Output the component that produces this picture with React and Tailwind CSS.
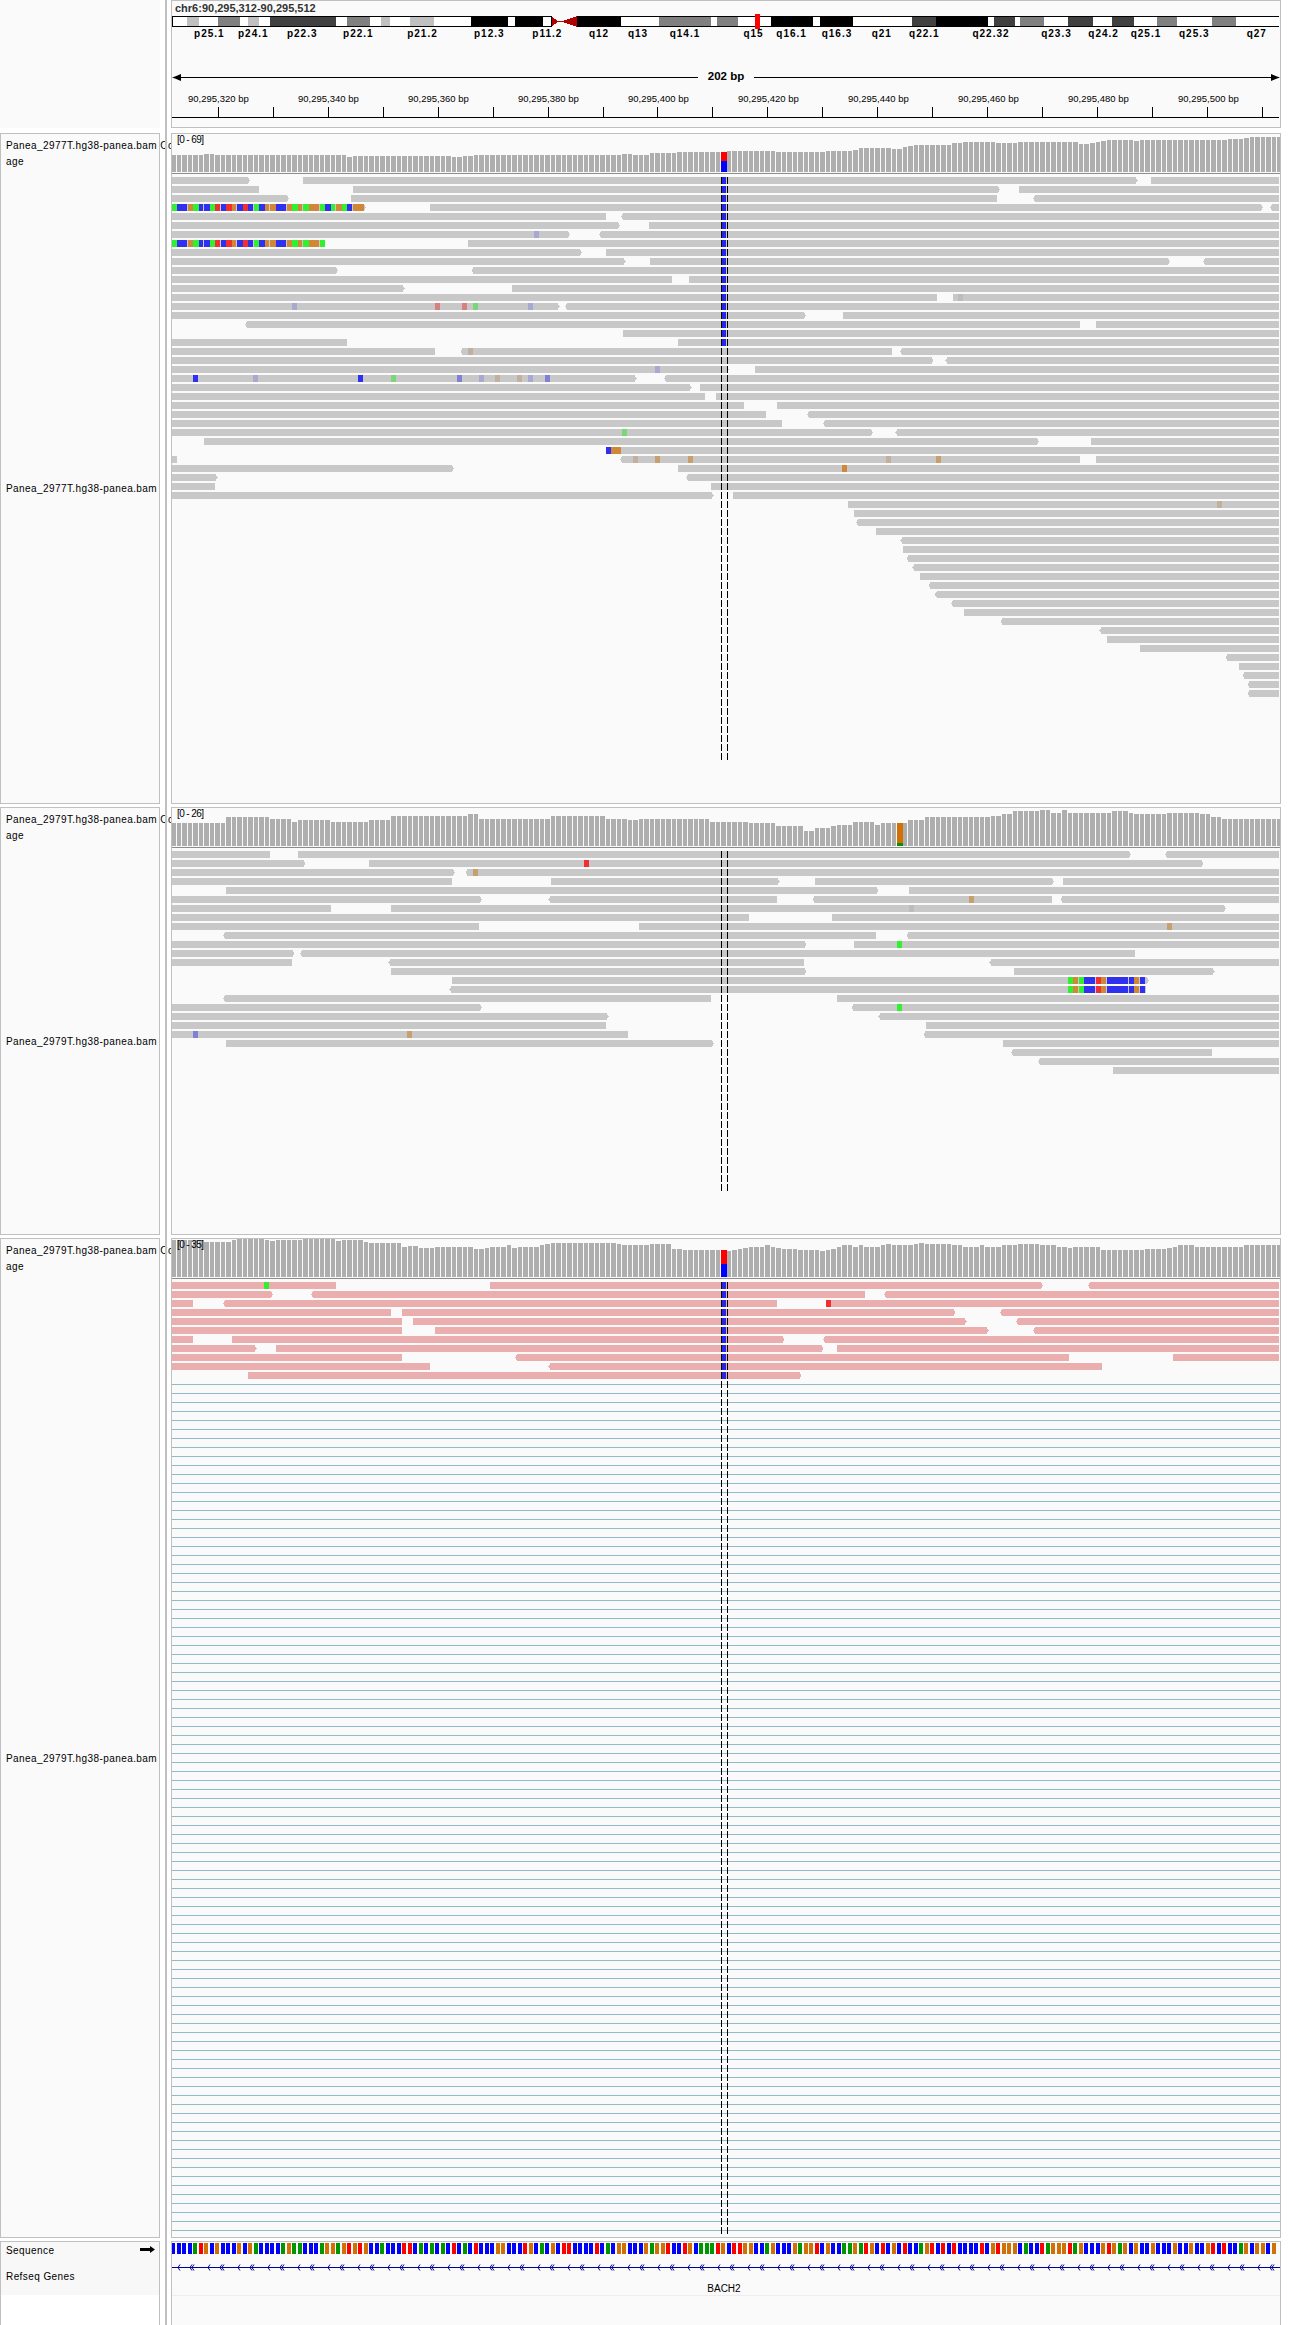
import React from "react";

const E = 1279;
const baseX = (b) => 171 + 5.503 * b;
const L = "#a8a8d0", RS = "#d88080", GS = "#78d878", T1 = "#c0b09c", T2 = "#c8a070", MB = "#8080d8";
const BL = "#3030f0", OR = "#d08838", GN = "#30f030", RD = "#f03030", GY = "#bcbcbc";
const MIS = { A: GN, C: BL, G: OR, T: RD };
const SEQC = { A: "#009600", C: "#0000ff", G: "#d17105", T: "#ff0000" };

const SEQ =
  "CCCCATGCGCCCGCGACCCCAGAACCCAGGAGTGTGCCACC" +
  "CTTCACACACTCACTCCCGGCCCTGCACGCTTCCCC" +
  "TCACGGCCCGAGGTCCTGCAAATGCTTGGCCAGCCCGAGGTCGCCAAGATGCTCGCTCCAGTCTCTCCCCTC" +
  "GTGGGCACCTAGGGTAGCCCGTGAGCGCCGCCCGCCGCCGTCTCCAGCGGCG";

// each read: [start, end, arrow]  arrow: 1 right, -1 left, 0 none
const P1 = [
  [[172,250,1],[303,1137.6,1],[1151,E,0]],
  [[172,259,0],[353,1000,1],[1019,E,0]],
  [[172,289,1],[351,997,0],[1033,E,-1]],
  [[172,366,1],[430,1263,1],[1270,E,-1]],
  [[172,606,0],[621,E,-1]],
  [[172,620,1],[649,E,0]],
  [[172,570,1],[599,E,-1]],
  [[172,325,0],[468,E,0]],
  [[172,582,1],[606,E,0]],
  [[172,625.6,1],[650,1170,1],[1203,E,-1]],
  [[172,338,1],[471.6,E,-1]],
  [[172,672,0],[689,E,0]],
  [[172,404.6,1],[512,E,0]],
  [[172,937,0],[953,E,0]],
  [[172,559.6,1],[565,E,-1]],
  [[172,806,1],[843,E,0]],
  [[245,1080,-2],[1096,E,0]],
  [[623,E,0]],
  [[172,347,0],[678,E,0]],
  [[172,435,0],[460.6,892,-2],[900,E,-1]],
  [[172,933.5,1],[945.5,E,-1]],
  [[172,729,1],[755,E,0]],
  [[172,636.6,1],[664,E,-1]],
  [[172,691.6,1],[700,E,0]],
  [[172,705,0],[716,E,0]],
  [[172,744,0],[777,E,0]],
  [[172,766,0],[807,E,-1]],
  [[172,782,0],[823,E,-1]],
  [[172,872.7,1],[895.4,E,-1]],
  [[204,1038.7,1],[1091,E,0]],
  [[606,E,0]],
  [[172,177,0],[620,1080,-2],[1096,E,0]],
  [[172,454,1],[678,E,0]],
  [[172,217.6,1],[686,E,-1]],
  [[172,215,0],[711,E,0]],
  [[172,713.6,1],[733,E,0]],
  [[848,E,0]],
  [[854,E,0]],
  [[856,E,-1]],
  [[876,E,0]],
  [[900.4,E,-1]],
  [[903,E,0]],
  [[906.6,E,-1]],
  [[912.4,E,-1]],
  [[920,E,0]],
  [[928.6,E,-1]],
  [[934.8,E,-1]],
  [[951,E,-1]],
  [[964,E,0]],
  [[1000.6,E,-1]],
  [[1099.5,E,-1]],
  [[1107,E,0]],
  [[1140,E,0]],
  [[1225.7,E,-1]],
  [[1239,E,0]],
  [[1242.7,E,-1]],
  [[1247.7,E,-1]],
  [[1247.7,E,-1]],
];

const P1M = [
  [6,534,L],[13,958,GY],
  [14,292,L],[14,435,RS],[14,462,RS],[14,473,GS],[14,528,L],
  [19,468,T1],[21,655,L],
  [22,193,BL],[22,253,L],[22,358,BL],[22,391,GS],[22,457,MB],[22,479,L],[22,495,T1],[22,517,T1],[22,528,L],[22,545,MB],
  [28,622,GS],
  [30,606,BL],[30,611,OR],[30,616,OR],
  [31,633,T1],[31,655,T2],[31,688,T2],[31,886,T1],[31,936,T2],
  [32,842,OR],[36,1217,T1],
];

const P2 = [
  [[172,270,0],[298,1131,1],[1165,E,-1]],
  [[172,305.5,1],[369,1203.4,1]],
  [[172,454.8,1],[465.6,E,-1]],
  [[172,452,0],[551,779.6,1],[815,1054,1],[1063,E,0]],
  [[226,878.5,1],[909,E,0]],
  [[172,481.8,1],[548.5,777,-2],[812.7,1052,-2],[1060.6,E,-1]],
  [[172,331,0],[391,1225.7,1]],
  [[172,749,0],[832,E,0]],
  [[172,479,0],[639,E,0]],
  [[223,876,-2],[906.6,E,-1]],
  [[172,806.5,1],[854,E,0]],
  [[172,294.4,1],[300,1135,-2]],
  [[172,292,0],[388.5,804,-2],[989.4,E,-1]],
  [[391,806.5,1],[1013.8,1214.6,1]],
  [[452,1148.8,1]],
  [[449.4,1145.8,-2]],
  [[223,710.8,-2],[837,E,0]],
  [[172,481.8,1],[851.6,E,-1]],
  [[172,608.6,1],[878.5,E,-1]],
  [[172,606,0],[926,E,0]],
  [[172,628,0],[923.6,E,-1]],
  [[226,713.7,1],[1003,E,0]],
  [[1011,1212,-2]],
  [[1038,E,-1]],
  [[1113,E,0]],
];

const P2M = [
  [1,584,RD],[2,473,T2],[5,969,T2],[6,909,GY],[8,1167,T2],[10,897,GN],[17,897,GN],[20,193,MB],[20,407,T2],
];

const P3 = [
  [[172,336,0],[490,1043,1],[1088,E,-1]],
  [[172,272.8,1],[311,865,-2],[884,E,-1]],
  [[172,193,0],[223,777,-2],[826,E,0]],
  [[172,391,0],[402,955.5,1],[1000,E,-1]],
  [[172,402,0],[413,966.6,1],[1016,E,-1]],
  [[172,402,0],[435,988.6,1],[1033,E,-1]],
  [[172,193,0],[232,784.5,1],[823,E,-1]],
  [[172,256.6,1],[276,823.4,1],[837,E,0]],
  [[172,402,0],[515,1069,-2],[1173,E,0]],
  [[172,430,0],[548.5,1102,-2]],
  [[248,801.5,1]],
];
const P3M = [[0,264,GN],[2,826,RD]];

const COV1L = [[0,464],[490,461],[518,464],[625,466],[837,470],[850,467],[1090,470],[1115,467],[1141,464],[1500,461],[1525,464]];
const COV1R = [[0,460],[65,456],[130,455],[185,454],[305,456],[425,452],[490,450],[505,444],[585,448],[612,440],[625,437],[640,435],[731,429],[757,426],[837,429],[890,426],[1035,432],[1063,429],[1077,426],[1090,423],[1105,420],[1168,423],[1182,420],[1395,417],[1435,414],[1450,411]];
const COV2L = [[0,68],[545,51],[650,57],[703,66],[716,60],[795,66],[890,60],[943,48],[1130,42],[1155,57],[1329,48],[1462,57],[1515,60],[1540,57]];
const COV2R = [[0,57],[145,66],[238,69],[303,78],[372,93],[398,84],[437,78],[451,75],[490,66],[543,75],[557,69],[625,60],[663,51],[823,48],[850,42],[877,33],[945,30],[970,39],[997,30],[1010,39],[1115,33],[1155,39],[1168,42],[1248,39],[1328,42],[1355,51],[1382,57]];
const COV3L = [[0,60],[490,66],[557,60],[570,56],[637,60],[650,62],[660,60],[730,56],[810,62],[823,60],[877,66],[890,69],[970,81],[982,78],[1008,84],[1048,81],[1141,87],[1168,84],[1182,81],[1221,75],[1235,84],[1248,81],[1302,75],[1315,72],[1329,69],[1488,72],[1500,75]];
const COV3R = [[0,73],[53,87],[80,90],[185,93],[198,90],[212,87],[225,84],[239,81],[278,75],[291,81],[305,84],[318,87],[358,90],[411,93],[425,90],[438,87],[451,81],[465,75],[491,81],[505,75],[518,81],[558,75],[571,72],[585,75],[638,72],[651,69],[664,72],[731,75],[758,81],[797,75],[811,81],[850,75],[892,72],[945,75],[983,81],[1010,84],[1023,81],[1090,90],[1196,87],[1250,84],[1263,81],[1276,75],[1316,81],[1435,75]];

const lookup = (pairs, d) => {
  let v = pairs[0][1];
  for (const p of pairs) if (p[0] <= d) v = p[1];
  return v;
};

const readPts = (s, e, a, y) => {
  const h = 7;
  if (a === 1) return `${s},${y} ${e - 2},${y} ${e},${y + 3.5} ${e - 2},${y + h} ${s},${y + h}`;
  if (a === -1) return `${s + 2},${y} ${e},${y} ${e},${y + h} ${s + 2},${y + h} ${s},${y + 3.5}`;
  if (a === -2) return `${s + 2},${y} ${e},${y} ${e},${y + h} ${s + 2},${y + h} ${s},${y + 3.5}`;
  return `${s},${y} ${e},${y} ${e},${y + h} ${s},${y + h}`;
};

function Coverage({ left, right, bottom, site }) {
  const bars = [];
  for (let b = 0; b < 202; b++) {
    const x0 = Math.round(baseX(b));
    const x1 = Math.round(baseX(b + 1));
    const c = baseX(b) + 2.7;
    const top = c < 650 ? lookup(left, c * 2.412) : lookup(right, (c - 650) * 2.416);
    const h = (bottom - top) / 3;
    const yB = site.yBottom;
    const y = yB - h;
    if (b === site.b) {
      const split = y + h * site.frac;
      bars.push(<rect key={b} x={x0} y={y} width={x1 - x0} height={split - y} fill={site.c1} />);
      bars.push(<rect key={b + "s"} x={x0} y={split} width={x1 - x0} height={yB - split} fill={site.c2} />);
    } else {
      bars.push(<rect key={b} x={x0} y={y} width={x1 - x0 - 1} height={h} fill="#aeaeae" />);
    }
  }
  return <g>{bars}</g>;
}

function Reads({ rows, firstY, fill }) {
  return (
    <g fill={fill}>
      {rows.map((segs, r) =>
        segs.map((s, i) => <polygon key={r + "-" + i} points={readPts(s[0], s[1], s[2], firstY + 9 * r)} />)
      )}
    </g>
  );
}

function Mismatches({ list, firstY }) {
  return (
    <g>
      {list.map((m, i) => (
        <rect key={i} x={m[1]} y={firstY + 9 * m[0]} width={5} height={7} fill={m[2]} />
      ))}
    </g>
  );
}

function BaseRun({ row, firstY, text }) {
  return (
    <g>
      {text.split("").map((ch, i) => {
        const x0 = Math.round(baseX(i));
        return <rect key={i} x={x0} y={firstY + 9 * row} width={Math.round(baseX(i + 1)) - x0 - (i % 3 === 2 ? 1 : 0)} height={7} fill={MIS[ch]} />;
      })}
    </g>
  );
}

function SiteCol({ rows, firstY }) {
  const out = [];
  for (let r = 0; r < rows; r++) out.push(<rect key={r} x={721} y={firstY + 9 * r} width={5} height={7} fill="#2626e6" />);
  return <g>{out}</g>;
}

function Cursor({ y1, y2 }) {
  return (
    <g>
      <line x1={721.5} x2={721.5} y1={y1} y2={y2} stroke="#ffffff" />
      <line x1={727.5} x2={727.5} y1={y1} y2={y2} stroke="#ffffff" />
      <line x1={721.5} x2={721.5} y1={y1} y2={y2} stroke="#000000" strokeDasharray="7 2" />
      <line x1={727.5} x2={727.5} y1={y1} y2={y2} stroke="#000000" strokeDasharray="7 2" />
    </g>
  );
}

function NameBox({ cls, text, bam }) {
  return (
    <div className={"w-[160px] border border-[#c0c0c0] bg-[#fafafa] flex flex-col " + cls}>
      <div className="h-[40px] pl-[5px] pt-[4px] text-[10px] leading-[16px] tracking-[0.42px] text-black whitespace-nowrap">
        <div>{text} Co</div>
        <div>age</div>
      </div>
      <div className="flex-1 flex items-center pl-[5px] text-[10px] tracking-[0.42px] text-black whitespace-nowrap">{bam}</div>
    </div>
  );
}

const IDEO_L = [[415,450,"#fff"],[450,481,"#c0c0c0"],[481,527,"#fff"],[527,580,"#808080"],[580,597,"#fff"],[597,624,"#c0c0c0"],[624,652,"#fff"],[652,810,"#404040"],[810,838,"#fff"],[838,892,"#808080"],[892,918,"#fff"],[918,940,"#c0c0c0"],[940,988,"#fff"],[988,1048,"#c0c0c0"],[1048,1137,"#fff"],[1137,1225,"#000"],[1225,1243,"#fff"],[1243,1310,"#000"],[1310,1330,"#fff"],[1392,1498,"#000"],[1498,1568,"#fff"]];
const IDEO_R = [[0,22,"#fff"],[22,148,"#808080"],[148,163,"#fff"],[163,212,"#808080"],[212,292,"#fff"],[292,394,"#000"],[394,411,"#fff"],[411,490,"#000"],[490,633,"#fff"],[633,692,"#404040"],[692,817,"#000"],[817,830,"#fff"],[830,881,"#404040"],[881,895,"#fff"],[895,953,"#808080"],[953,1010,"#fff"],[1010,1071,"#404040"],[1071,1117,"#fff"],[1117,1170,"#404040"],[1170,1226,"#fff"],[1226,1274,"#808080"],[1274,1358,"#fff"],[1358,1415,"#808080"],[1415,1520,"#fff"]];
const BANDS = [["p25.1",209.4],["p24.1",253.3],["p22.3",302.2],["p22.1",358.4],["p21.2",422.5],["p12.3",489.3],["p11.2",547.3],["q12",599],["q13",638],["q14.1",685],["q15",753.5],["q16.1",791.6],["q16.3",837],["q21",881.8],["q22.1",924.4],["q22.32",991],["q23.3",1056.5],["q24.2",1103.6],["q25.1",1146],["q25.3",1194.3],["q27",1256.8]];
const LABELS = ["90,295,320 bp","90,295,340 bp","90,295,360 bp","90,295,380 bp","90,295,400 bp","90,295,420 bp","90,295,440 bp","90,295,460 bp","90,295,480 bp","90,295,500 bp"];

function Ideogram() {
  return (
    <svg width="1108" height="26" viewBox="172 14 1108 26" className="block">
      <g shapeRendering="crispEdges">
        {IDEO_L.map((b, i) => (
          <rect key={"l" + i} x={b[0] / 2.412} y={17} width={(b[1] - b[0]) / 2.412} height={9} fill={b[2]} />
        ))}
        {IDEO_R.map((b, i) => (
          <rect key={"r" + i} x={650 + b[0] / 2.416} y={17} width={(b[1] - b[0]) / 2.416} height={9} fill={b[2]} />
        ))}
        <rect x={172} y={16} width={379} height={1} fill="#000" />
        <rect x={172} y={26} width={379} height={1} fill="#000" />
        <rect x={577} y={16} width={702} height={1} fill="#000" />
        <rect x={577} y={26} width={702} height={1} fill="#000" />
        <rect x={172} y={16} width={1} height={11} fill="#000" />
        <rect x={551} y={16} width={1} height={11} fill="#000" />
        <polygon points="552,17 559,21.5 552,26" fill="#b00000" />
        <rect x={559} y={21} width={2} height={1} fill="#b00000" />
        <polygon points="577,16 561,21.5 577,27" fill="#b00000" />
        <rect x={755} y={14} width={5} height={15} fill="#ff0000" />
      </g>
      {BANDS.map((b) => (
        <text key={b[0]} x={b[1]} y={37} textAnchor="middle" fontSize="10" fontWeight="700" letterSpacing="1" fill="#000">
          {b[0]}
        </text>
      ))}
    </svg>
  );
}

function Ticks() {
  const t = [];
  for (let k = 0; k < 20; k++) {
    const x = Math.floor(218.5 + 54.93 * k) + 0.5;
    t.push(<line key={k} x1={x} x2={x} y1={107} y2={117} stroke="#000" />);
  }
  return (
    <svg width="1108" height="12" viewBox="172 106 1108 12" className="block">
      {t}
      <line x1={172} x2={1279} y1={117.5} y2={117.5} stroke="#000" />
    </svg>
  );
}

function Header() {
  return (
    <div className="w-[1110px] h-[128px] border border-[#c0c0c0] bg-[#fafafa] overflow-hidden">
      <div className="h-[13px] pl-[3px] text-[11px] leading-[15px] font-bold text-[#333333] whitespace-nowrap">chr6:90,295,312-90,295,512</div>
      <Ideogram />
      <div className="mt-[29px] h-[16px] flex items-center">
        <svg width="10" height="7" viewBox="0 0 10 7" className="block shrink-0">
          <polygon points="0,3.5 3,2.5 9,0 9,7 3,4.5" fill="#000" />
          <rect x="8" y="3" width="2" height="1" fill="#000" />
        </svg>
        <div className="flex-1 h-px bg-black" />
        <div className="w-[56px] text-center text-[11.5px] font-bold text-black whitespace-nowrap">202 bp</div>
        <div className="flex-1 h-px bg-black" />
        <svg width="10" height="7" viewBox="0 0 10 7" className="block shrink-0">
          <polygon points="10,3.5 7,2.5 1,0 1,7 7,4.5" fill="#000" />
          <rect x="0" y="3" width="2" height="1" fill="#000" />
        </svg>
      </div>
      <div className="mt-[7px] h-[14px] pl-[16px] flex items-center">
        {LABELS.map((l) => (
          <div key={l} className="w-[110px] shrink-0 text-[9.5px] text-black whitespace-nowrap">{l}</div>
        ))}
      </div>
      <Ticks />
    </div>
  );
}

function TrackBox({ cls, top, h, range, children }) {
  return (
    <div className={"relative w-[1110px] border border-[#c0c0c0] bg-[#fafafa] " + cls}>
      <svg width="1108" height={h} viewBox={`172 ${top} 1108 ${h}`} className="block" shapeRendering="crispEdges">
        {children}
      </svg>
      <div className="absolute left-[5px] top-0 text-[10px] leading-[12px] tracking-[-0.6px] text-black whitespace-nowrap">{range}</div>
    </div>
  );
}

function SeqBox() {
  const chev = [];
  for (let k = 0; k < 37; k++) {
    const a = 179 + 30 * k;
    const c = 192 + 30 * k;
    if (a < 1279) chev.push(<polyline key={"a" + k} points={`${a + 1},2264.5 ${a - 1},2267.5 ${a + 1},2270.5`} fill="none" stroke="#000096" />);
    if (c < 1279) {
      chev.push(<polyline key={"c" + k} points={`${c},2264.5 ${c - 2},2267.5 ${c},2270.5`} fill="none" stroke="#000096" />);
      chev.push(<polyline key={"d" + k} points={`${c + 2},2264.5 ${c},2267.5 ${c + 2},2270.5`} fill="none" stroke="#000096" />);
    }
  }
  return (
    <div className="mt-[3px] w-[1110px] h-[84px] border-x border-t border-[#c0c0c0] bg-[#fafafa]">
      <svg width="1108" height="83" viewBox="172 2242 1108 83" className="block">
        <g shapeRendering="crispEdges">
          {SEQ.split("").map((ch, i) => {
            const x = Math.round(baseX(i));
            return <rect key={i} x={x} y={2243} width={4.4} height={10.5} fill={SEQC[ch]} />;
          })}
          <rect x={172} y={2267} width={1108} height={1} fill="#000096" />
          <rect x={172} y={2295} width={1108} height={1} fill="#eeeeee" />
        </g>
        {chev}
        <text x={724} y={2291.5} textAnchor="middle" fontSize="10" fill="#000">BACH2</text>
      </svg>
    </div>
  );
}

export default function App() {
  return (
    <div className="w-[1299px] h-[2325px] bg-white flex overflow-hidden [font-family:'Liberation_Sans',sans-serif]">
      <div className="w-[160px] shrink-0 flex flex-col">
        <div className="h-[128px] bg-[#fafafa]" />
        <div className="h-[5px]" />
        <NameBox cls="h-[671px]" text="Panea_2977T.hg38-panea.bam" bam="Panea_2977T.hg38-panea.bam" />
        <div className="h-[3px]" />
        <NameBox cls="h-[428px]" text="Panea_2979T.hg38-panea.bam" bam="Panea_2979T.hg38-panea.bam" />
        <div className="h-[3px]" />
        <NameBox cls="h-[1000px]" text="Panea_2979T.hg38-panea.bam" bam="Panea_2979T.hg38-panea.bam" />
        <div className="mt-[3px] flex-1 border-x border-t border-[#c0c0c0]">
          <div className="h-[53px] bg-[#f8f8f8] pl-[5px] pr-[4px] text-[10px] tracking-[0.42px] text-black">
            <div className="h-[16px] flex items-center justify-between">
              <span>Sequence</span>
              <svg width="15" height="8" viewBox="0 0 15 8" className="block">
                <polygon points="0,2 10,2 10,0 15,3.5 10,7 10,5 0,5" fill="#000" />
              </svg>
            </div>
            <div className="mt-[10px] h-[16px] flex items-center">Refseq Genes</div>
          </div>
        </div>
      </div>
      <div className="ml-[5px] w-[2px] shrink-0 bg-[#c0c0c0]" />
      <div className="ml-[4px] w-[1110px] shrink-0 flex flex-col">
        <Header />
        <div className="h-[5px]" />
        <TrackBox cls="h-[671px]" top={134} h={669} range="[0 - 69]">
          <Coverage left={COV1L} right={COV1R} bottom={516} site={{ b: 100, yBottom: 172, frac: 0.45, c1: "#ff0000", c2: "#0000ff" }} />
          <rect x={172} y={173} width={1108} height={1} fill="#8c8c8c" />
          <Reads rows={P1} firstY={177} fill="#c8c8c8" />
          <Mismatches list={P1M} firstY={177} />
          <BaseRun row={3} firstY={177} text="ACCGACCATCTGCTCACGGCCGAGAGGACAGACGG" />
          <BaseRun row={7} firstY={177} text="ACCGACCATCTGCTCACGGCCGAGAGGA" />
          <SiteCol rows={19} firstY={177} />
          <Cursor y1={177} y2={761} />
        </TrackBox>
        <div className="h-[3px]" />
        <TrackBox cls="h-[428px]" top={808} h={426} range="[0 - 26]">
          <Coverage left={COV2L} right={COV2R} bottom={138} site={{ b: 132, yBottom: 846, frac: 0.87, c1: "#d17105", c2: "#009600" }} />
          <rect x={172} y={847} width={1108} height={1} fill="#8c8c8c" />
          <Reads rows={P2} firstY={851} fill="#c8c8c8" />
          <Mismatches list={P2M} firstY={851} />
          {[14, 15].map((r) =>
            "AGACCTGCCCCCGC".split("").map((ch, i) => (
              <rect key={r + "-" + i} x={Math.round(baseX(163 + i))} y={851 + 9 * r} width={i === 3 || i === 7 || i === 8 ? 6 : 5} height={7} fill={MIS[ch]} />
            ))
          )}
          <Cursor y1={851} y2={1191} />
        </TrackBox>
        <div className="h-[3px]" />
        <TrackBox cls="h-[1000px]" top={1239} h={998} range="[0 - 35]">
          <Coverage left={COV3L} right={COV3R} bottom={171} site={{ b: 100, yBottom: 1277, frac: 0.5, c1: "#ff0000", c2: "#0000ff" }} />
          <rect x={172} y={1278} width={1108} height={1} fill="#8c8c8c" />
          <Reads rows={P3} firstY={1282} fill="#ebaeae" />
          <Mismatches list={P3M} firstY={1282} />
          <SiteCol rows={11} firstY={1282} />
          {Array.from({ length: 95 }, (_, k) => (
            <rect key={k} x={172} y={1384 + 9 * k} width={1108} height={1} fill="#93bacb" />
          ))}
          <Cursor y1={1282} y2={2236} />
        </TrackBox>
        <SeqBox />
      </div>
    </div>
  );
}
